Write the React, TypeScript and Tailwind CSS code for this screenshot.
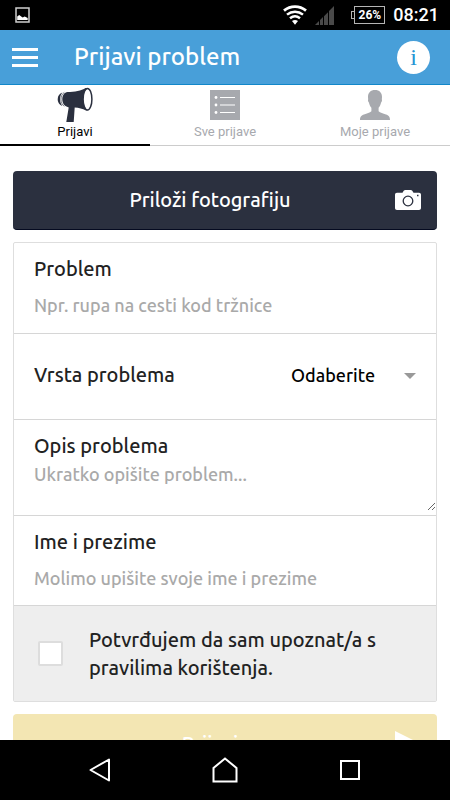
import React from 'react';

type TabId = 'prijavi' | 'sve' | 'moje';

const MegaphoneIcon: React.FC = () => (
    <svg viewBox="0 0 36 36" className="w-9 h-9" aria-hidden="true">
        <path d="M5.400 5.600C2.600 6.400.7 9 .7 12.200s1.900 6 4.700 6.700C3.900 17.200 3.100 14.900 3.100 12.300s.8-5 2.300-6.700z" fill="#2b303f" />
        <path d="M7.300 5.300C5.200 6.800 4 9.300 4 12.300s1.200 5.500 3.300 7" fill="none" stroke="#2b303f" strokeWidth=".6" />
        <path d="M10.500 5C7.500 5.200 5.300 8.300 5.300 12.300s2.200 7.200 5.400 7.600l1 .6L9.300 35h7.400l1-14.600c4.300.2 7.800 1.200 11.300 3.100h1.500V1H28.500C24.500 3.800 17.500 5 10.500 5z" fill="#2b303f" />
        <ellipse cx="30.500" cy="12.200" rx="4.400" ry="10.800" fill="#ffffff" stroke="#2b303f" strokeWidth="1.500" />
    </svg>
);

const ListIcon: React.FC = () => (
    <svg viewBox="0 0 30 30" className="w-[30px] h-[30px]" aria-hidden="true">
        <path d="M0 0h30v30H0z" fill="#a7a9ae" />
        <path d="M10 7.500h15M10 15h15M10 22.500h15" stroke="#ffffff" strokeWidth="1.200" />
        <circle cx="6" cy="7.500" r="1.400" fill="#ffffff" />
        <circle cx="6" cy="15" r="1.400" fill="#ffffff" />
        <circle cx="6" cy="22.500" r="1.400" fill="#ffffff" />
    </svg>
);

const PersonIcon: React.FC = () => (
    <svg viewBox="0 0 30 30" className="w-[30px] h-[30px]" aria-hidden="true">
        <path
            d="M15 0c-4.500 0-7 2.700-7 7 0 .8.100 1.600.200 2.300-.500.600-.2 2.300.700 3.200.500 2.200 1.300 4 2.500 5.300v3.400c-1.500 1.500-4.500 2.300-7.400 3.300C1.500 25.400 0 26.500 0 30h30c0-3.500-1.500-4.600-4-5.500-2.900-1-5.900-1.800-7.400-3.300v-3.400c1.200-1.300 2-3.100 2.500-5.300.9-.9 1.200-2.600.7-3.200.1-.7.2-1.500.2-2.300 0-4.300-2.500-7-7-7z"
            fill="#a7a9ae"
        />
    </svg>
);

const CameraIcon: React.FC = () => (
    <svg viewBox="0 0 26 20" className="w-[26px] h-5" aria-hidden="true">
        <path d="M2 2.800h5.500C8.300 1.200 9 0 10.300 0h5.400c1.300 0 2 1.200 2.800 2.800H24c1.200 0 2 .8 2 2V18c0 1.200-.8 2-2 2H2c-1.200 0-2-.8-2-2V4.800c0-1.200.8-2 2-2z" fill="#ffffff" />
        <circle cx="13" cy="11" r="4.800" fill="none" stroke="#2b303f" strokeWidth="1.300" />
        <path d="M22 4.800h1.500v1.500H22z" fill="#2b303f" />
    </svg>
);

const tabs: { id: TabId; label: string; icon: React.ReactNode }[] = [
    { id: 'prijavi', label: 'Prijavi', icon: <MegaphoneIcon /> },
    { id: 'sve', label: 'Sve prijave', icon: <ListIcon /> },
    { id: 'moje', label: 'Moje prijave', icon: <PersonIcon /> },
];

const StatusBar: React.FC = () => (
    <div className="flex h-[30px] shrink-0 items-center justify-between bg-black pl-[15px] pr-[11px] font-[Roboto,sans-serif]">
        <svg viewBox="0 0 15 16" className="w-[15px] h-4" aria-hidden="true">
            <path d="M1 1h13v14H1z" fill="none" stroke="#cfcfcf" strokeWidth="1.500" />
            <path d="M2.200 13V9.500l2-1.500 2 1.500 1.500 1 2-1 3 1.500v2z" fill="#ffffff" />
        </svg>
        <div className="flex items-center">
            <svg viewBox="0 0 24 20" className="w-6 h-5" aria-hidden="true">
                <path d="M1 5.600C7.500.2 16.500.2 23 5.600" fill="none" stroke="#ffffff" strokeWidth="2.800" />
                <path d="M4 9.600c4.800-3.900 11.200-3.900 16 0M7 13.200c3-2.400 7-2.400 10 0" fill="none" stroke="#ffffff" strokeWidth="2.500" />
                <path d="M9 16c2-1.500 4-1.500 6 0l-3 3.800z" fill="#ffffff" />
            </svg>
            <svg viewBox="0 0 19 19" className="ml-2 w-[19px] h-[19px]" aria-hidden="true">
                <path d="M0 19l4-4v4zM5 14l3-3v8H5zM9 10.200l4-4V19H9zM14 5l5-5v19h-5z" fill="#4a4a4a" />
            </svg>
            <div className="relative ml-5 flex h-[18px] w-[31px] items-center justify-center border border-[#b5b5b5] text-xs font-bold text-white">
                <span className="absolute -left-1 top-1 h-2 w-1 border border-r-0 border-[#b5b5b5]" />
                26%
            </div>
            <span className="ml-2 text-lg leading-5 font-medium text-white">08:21</span>
        </div>
    </div>
);

const App: React.FC = () => {
    const [tab, setTab] = React.useState<TabId>('prijavi');
    const [problem, setProblem] = React.useState('');
    const [kind, setKind] = React.useState('');
    const [description, setDescription] = React.useState('');
    const [name, setName] = React.useState('');
    const [accepted, setAccepted] = React.useState(false);

    function handleSubmit(e: React.FormEvent) {
        e.preventDefault();
    }

    const labelStyle = 'block text-xl leading-7 font-medium text-[#222222]';
    const inputStyle = 'block w-full bg-transparent text-lg leading-7 font-medium outline-none placeholder:text-[#a9a9a9]';

    return (
        <div className="flex h-screen flex-col bg-white font-['Ubuntu','Noto_Sans',sans-serif]">
            <StatusBar />

            <header className="flex h-[55px] shrink-0 items-center border-b border-[#1187c9] bg-[#489fd9] pl-3 pr-5">
                <button type="button" aria-label="Izbornik" className="flex w-[26px] flex-col gap-[5px]">
                    <span className="h-[3px] bg-white" />
                    <span className="h-[3px] bg-white" />
                    <span className="h-[3px] bg-white" />
                </button>
                <h1 className="ml-9 flex-1 text-2xl leading-7 font-medium text-white">Prijavi problem</h1>
                <button type="button" className="flex size-[33px] items-center justify-center rounded-full bg-white font-['Liberation_Serif',serif] text-2xl leading-6 text-[#2494d3]">
                    i
                </button>
            </header>

            <nav className="grid h-[61px] shrink-0 grid-cols-3 font-[Roboto,sans-serif]">
                {tabs.map(item => (
                    <button
                        key={item.id}
                        type="button"
                        onClick={() => setTab(item.id)}
                        className={
                            tab === item.id
                                ? 'flex flex-col items-center border-b-2 border-black text-[13px] leading-4 text-black'
                                : 'flex flex-col items-center border-b border-[#cccccc] text-[13px] leading-4 text-[#a7a9ae]'
                        }
                    >
                        <span className="flex h-[39px] items-center">{item.icon}</span>
                        {item.label}
                    </button>
                ))}
            </nav>

            <main className="min-h-0 flex-1 overflow-y-auto px-[13px] pt-[25px] [scrollbar-width:none]">
                <form onSubmit={handleSubmit}>
                    <button type="button" className="flex h-[59px] w-full items-center rounded border-b border-[#050a20] bg-[#2b303f] pl-3 pr-4 text-xl leading-7 font-medium text-white">
                        <span className="flex-1 text-center">Priloži fotografiju</span>
                        <CameraIcon />
                    </button>

                    <div className="mt-3 divide-y divide-[#d6d6d6] rounded-xs border border-[#dedede]">
                        <div className="h-[91px] px-5 pt-3">
                            <label htmlFor="problem" className={labelStyle}>Problem</label>
                            <input
                                id="problem"
                                type="text"
                                value={problem}
                                onChange={e => setProblem(e.target.value)}
                                className={`mt-2 ${inputStyle}`}
                                placeholder="Npr. rupa na cesti kod tržnice"
                            />
                        </div>

                        <div className="flex h-[86px] items-center justify-between px-5 pb-1">
                            <label htmlFor="kind" className={labelStyle}>Vrsta problema</label>
                            <div className="relative">
                                <select
                                    id="kind"
                                    value={kind}
                                    onChange={e => setKind(e.target.value)}
                                    className="block appearance-none bg-transparent pr-10 text-lg leading-7 font-medium text-black outline-none"
                                >
                                    <option value="">Odaberite</option>
                                </select>
                                <svg viewBox="0 0 12 6" className="pointer-events-none absolute right-0 top-3 h-[6px] w-3" aria-hidden="true">
                                    <path d="M0 0h12L6 6z" fill="#999999" />
                                </svg>
                            </div>
                        </div>

                        <div className="flex h-24 flex-col pt-3">
                            <label htmlFor="description" className={`px-5 ${labelStyle}`}>Opis problema</label>
                            <textarea
                                id="description"
                                value={description}
                                onChange={e => setDescription(e.target.value)}
                                className={`mb-1 min-h-0 flex-1 px-5 ${inputStyle}`}
                                placeholder="Ukratko opišite problem..."
                            />
                        </div>

                        <div className="h-[90px] px-5 pt-3">
                            <label htmlFor="name" className={labelStyle}>Ime i prezime</label>
                            <input
                                id="name"
                                type="text"
                                value={name}
                                onChange={e => setName(e.target.value)}
                                className={`mt-2 ${inputStyle}`}
                                placeholder="Molimo upišite svoje ime i prezime"
                            />
                        </div>

                        <div className="flex h-[95px] items-center bg-[#eeeeee] pl-6 pr-5">
                            <input
                                id="accepted"
                                type="checkbox"
                                checked={accepted}
                                onChange={e => setAccepted(e.target.checked)}
                                className="size-[25px] shrink-0 appearance-none rounded-xs border-2 border-[#dddddd] bg-white checked:bg-[#489fd9]"
                            />
                            <label htmlFor="accepted" className={`ml-[26px] ${labelStyle}`}>
                                Potvrđujem da sam upoznat/a s pravilima korištenja.
                            </label>
                        </div>
                    </div>

                    <button type="submit" className="mt-3 flex h-[59px] w-full items-center rounded bg-[#f3e6b3] pl-3 pr-4 text-xl leading-7 font-medium text-white">
                        <span className="flex-1 text-center">Prijavi</span>
                        <svg viewBox="0 0 26 26" className="size-[26px]" aria-hidden="true">
                            <path d="M0 0l26 13L0 26V15l14-2L0 11z" fill="#ffffff" />
                        </svg>
                    </button>
                </form>
            </main>

            <footer className="grid h-[60px] shrink-0 grid-cols-[1fr_100px_1fr] items-center bg-black">
                <button type="button" aria-label="Natrag" className="mr-16 justify-self-end">
                    <svg viewBox="0 0 22 24" className="h-6 w-[22px]" aria-hidden="true">
                        <path d="M20 1.500v21L1.500 12z" fill="none" stroke="#ffffff" strokeWidth="2" strokeLinejoin="round" />
                    </svg>
                </button>
                <button type="button" aria-label="Početna" className="justify-self-center">
                    <svg viewBox="0 0 26 26" className="size-[26px]" aria-hidden="true">
                        <path d="M1.500 24.500V11L13 1.500 24.500 11v13.500z" fill="none" stroke="#ffffff" strokeWidth="2" />
                    </svg>
                </button>
                <button type="button" aria-label="Nedavno" className="ml-16 justify-self-start">
                    <svg viewBox="0 0 22 22" className="size-[22px]" aria-hidden="true">
                        <path d="M2 2h18v18H2z" fill="none" stroke="#ffffff" strokeWidth="2" />
                    </svg>
                </button>
            </footer>
        </div>
    );
};

export default App;
